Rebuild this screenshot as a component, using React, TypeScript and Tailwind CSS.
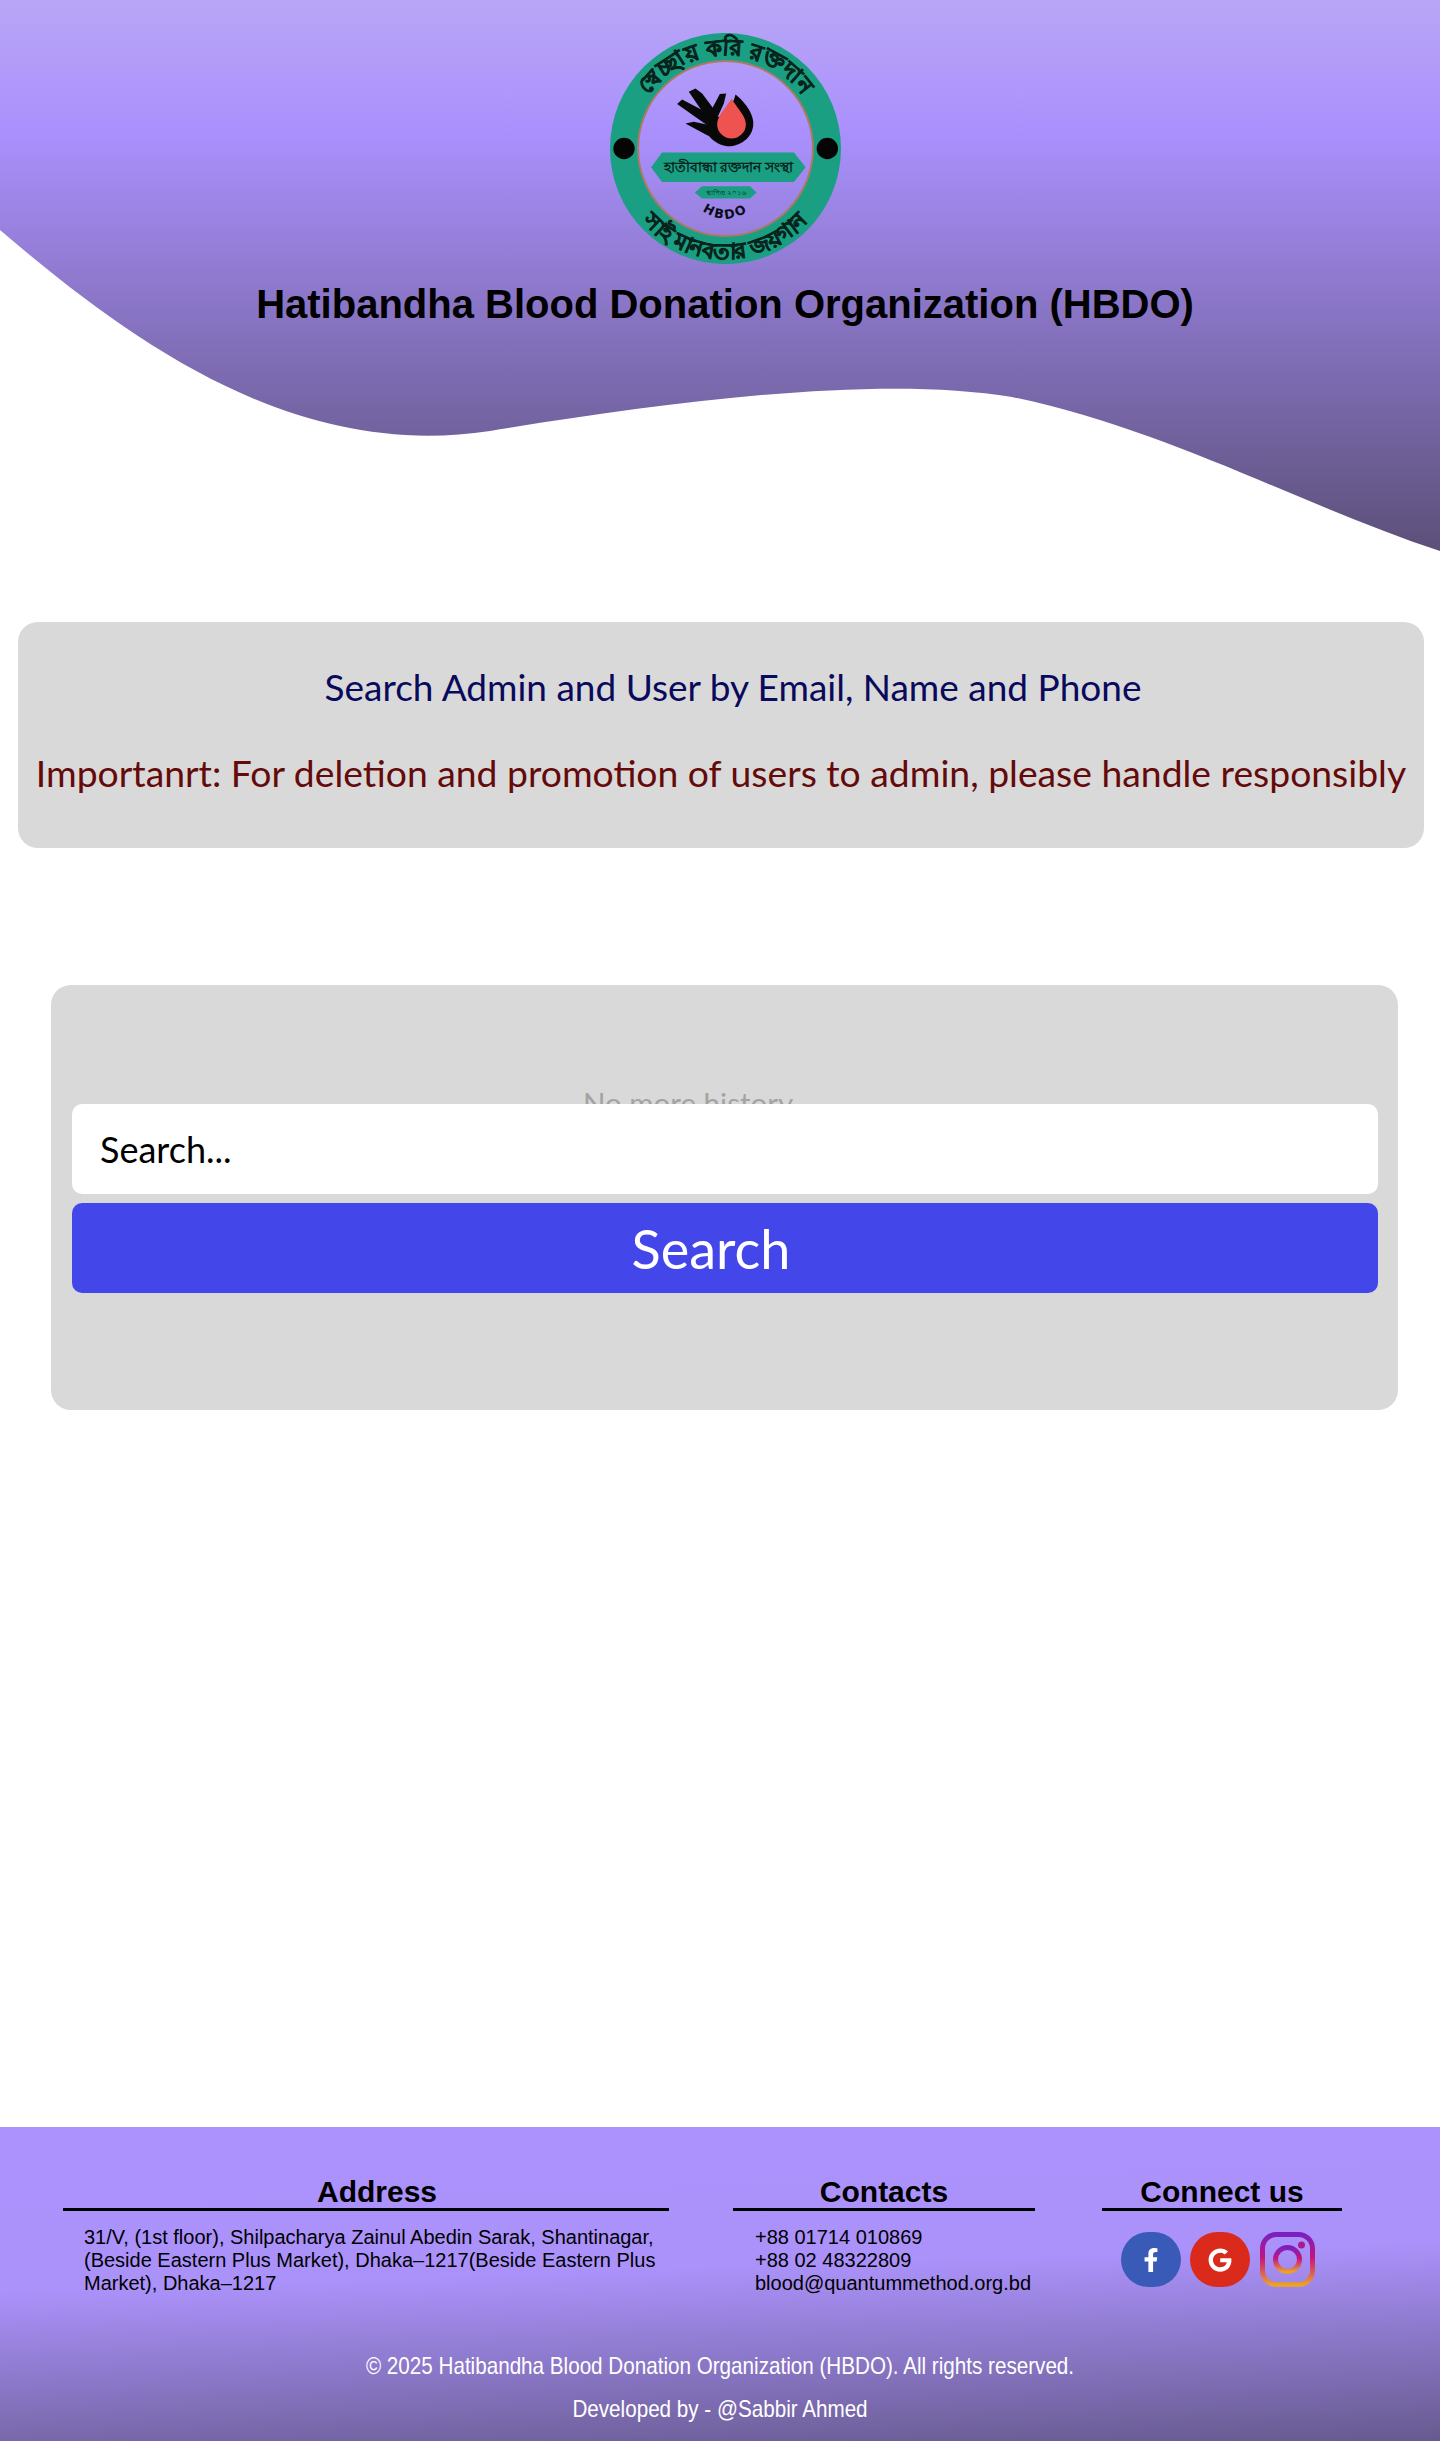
import { FaFacebookF, FaGoogle } from "react-icons/fa";

const bodyFont = "font-['Lato',sans-serif]";

function Logo() {
  return (
    <svg viewBox="149 69 692 692" className="w-[231px] h-[231px]">
      <defs>
        <path id="topArc" d="M 215 415 A 280 280 0 0 1 775 415" />
        <path id="bottomArc" d="M 163 415 A 332 332 0 0 0 827 415" />
        <path id="hbdoArc" d="M 395 575 Q 495 675 595 575" />
      </defs>
      <path
        fillRule="evenodd"
        fill="#1a9f82"
        d="M 149 415 a 346 346 0 1 0 692 0 a 346 346 0 1 0 -692 0 Z M 233 415 a 262 262 0 1 1 524 0 a 262 262 0 1 1 -524 0 Z"
      />
      <circle cx="495" cy="415" r="262" fill="none" stroke="#ab7a62" strokeWidth="6" />
      <circle cx="191" cy="415" r="32" fill="#050505" />
      <circle cx="800" cy="415" r="32" fill="#050505" />
      <text fontFamily="'Noto Sans', sans-serif" fontSize="68" fontWeight="700" fill="#06241c" stroke="#06241c" strokeWidth="2">
        <textPath href="#topArc" startOffset="50%" textAnchor="middle">স্বেচ্ছায় করি রক্তদান</textPath>
      </text>
      <text fontFamily="'Noto Sans', sans-serif" fontSize="66" fontWeight="700" fill="#06241c" stroke="#06241c" strokeWidth="2">
        <textPath href="#bottomArc" startOffset="50%" textAnchor="middle">সাই মানবতার জয়গান</textPath>
      </text>
      <path d="M 385 245 L 405 235 L 425 250 L 470 310 L 450 340 Z" fill="#080808" />
      <path d="M 350 282 L 365 268 L 445 310 L 440 345 Z" fill="#080808" />
      <path d="M 375 340 L 400 335 L 470 350 L 470 385 L 440 375 Z" fill="#080808" />
      <path d="M 478 252 L 497 250 L 490 280 L 465 335 L 445 315 Z" fill="#080808" />
      <path
        d="M 525 253 C 560 280 582 320 578 345 C 575 385 535 410 500 408 C 470 405 450 385 440 370 L 440 320 L 490 320 L 520 270 Z"
        fill="#080808"
      />
      <path d="M 513 266 C 490 300 470 320 470 342 A 43 43 0 0 0 556 342 C 556 320 535 300 513 266 Z" fill="#ef5350" />
      <polygon points="272,471 305,427 700,427 735,471 700,515 305,515" fill="#1a9f82" />
      <text x="503" y="485" textAnchor="middle" fontFamily="'Noto Sans', sans-serif" fontSize="42" fontWeight="700" fill="#06241c">হাতীবান্ধা রক্তদান সংস্থা</text>
      <polygon points="403,547 425,528 568,528 588,547 568,565 425,565" fill="#1a9f82" />
      <text x="497" y="555" textAnchor="middle" fontFamily="'Noto Sans', sans-serif" fontSize="22" fill="#06241c">স্থাপিত ২০১৬</text>
      <text fontFamily="'DejaVu Sans', sans-serif" fontSize="38" fontWeight="700" letterSpacing="6" fill="#0a0a1a">
        <textPath href="#hbdoArc" startOffset="50%" textAnchor="middle">HBDO</textPath>
      </text>
    </svg>
  );
}

function InstagramIcon() {
  return (
    <svg viewBox="0 0 55 55" className="w-[55px] h-[55px]">
      <defs>
        <linearGradient id="igGrad" x1="0" y1="0" x2="0" y2="1">
          <stop offset="0" stopColor="#7c1fc0" />
          <stop offset="0.45" stopColor="#c2157f" />
          <stop offset="0.75" stopColor="#d95a5a" />
          <stop offset="1" stopColor="#e8a030" />
        </linearGradient>
      </defs>
      <rect x="2.5" y="2.5" width="50" height="50" rx="14" fill="none" stroke="url(#igGrad)" strokeWidth="5" />
      <circle cx="27.5" cy="27.5" r="12" fill="none" stroke="url(#igGrad)" strokeWidth="5" />
      <circle cx="41.5" cy="13" r="3.5" fill="#b0178f" />
    </svg>
  );
}

function FooterColumn({ title, className, children }: { title: string; className: string; children: React.ReactNode }) {
  return (
    <div className={className}>
      <h3 className="text-center text-[30px] leading-[33px] font-bold text-black border-b-[3px] border-black">{title}</h3>
      {children}
    </div>
  );
}

export default function App() {
  return (
    <div className="relative w-full min-h-[2441px] bg-white flex flex-col font-['Liberation_Sans',sans-serif]">
      <header className="relative h-[622px] flex flex-col items-center pt-[33px]">
        <svg viewBox="0 0 1440 552" className="absolute top-0 left-0 w-full h-[552px]">
          <defs>
            <linearGradient id="headerGrad" x1="0" y1="0" x2="0" y2="1">
              <stop offset="0" stopColor="#b9a6f6" />
              <stop offset="0.24" stopColor="#aa90fd" />
              <stop offset="1" stopColor="#5c5079" />
            </linearGradient>
          </defs>
          <path
            d="M0,230 C140,350 300,460 490,431 C680,400 880,375 1012,397 C1170,430 1300,505 1440,551 L1440,0 L0,0 Z"
            fill="url(#headerGrad)"
          />
        </svg>
        <div className="relative ml-[10px] flex flex-col items-center">
          <Logo />
          <h1 className="mt-[18px] text-[40px] leading-[44px] font-bold text-black whitespace-nowrap">
            Hatibandha Blood Donation Organization (HBDO)
          </h1>
        </div>
      </header>

      <main className={`flex-1 ${bodyFont}`}>
        <section className="mx-[18px] w-[1406px] h-[226px] bg-[#d9d9d9] rounded-[20px] flex flex-col items-center pt-[41px]">
          <p className="ml-[24px] text-[37px] leading-[48px] text-[#0a0a5c] whitespace-nowrap">Search Admin and User by Email, Name and Phone</p>
          <p className="mt-[38px] text-[37.3px] leading-[48px] text-[#650a0a] whitespace-nowrap">
            Importanrt: For deletion and promotion of users to admin, please handle responsibly
          </p>
        </section>

        <section className="mt-[137px] ml-[51px] w-[1347px] h-[425px] bg-[#d9d9d9] rounded-[20px] px-[21px]">
          <div className="h-[119px] overflow-hidden relative">
            <p className="absolute top-[100px] left-[511px] text-[29.5px] leading-[36px] text-[#a3a3a3]">No more history</p>
          </div>
          <input
            placeholder="Search..."
            className="block w-[1306px] h-[90px] bg-white rounded-[10px] px-[28px] text-[36px] text-black placeholder:text-black outline-none"
          />
          <button className="mt-[9px] block w-[1306px] h-[90px] bg-[#4347ea] rounded-[10px] pr-[28px] text-[54px] text-white">
            Search
          </button>
        </section>
      </main>

      <footer className="h-[314px] bg-[linear-gradient(178deg,#ab92fc_0%,#ab92fb_45%,#675a8f_100%)] flex flex-col">
        <div className="flex pt-[48px]">
          <FooterColumn title="Address" className="ml-[63px] w-[606px] [&>h3]:pl-[22px]">
            <p className="mt-[15px] ml-[21px] mr-[10px] text-[20px] leading-[23px] text-black">
              31/V, (1st floor), Shilpacharya Zainul Abedin Sarak, Shantinagar, (Beside Eastern Plus Market), Dhaka–1217(Beside Eastern Plus Market), Dhaka–1217
            </p>
          </FooterColumn>
          <FooterColumn title="Contacts" className="ml-[64px] w-[302px]">
            <p className="mt-[15px] ml-[22px] text-[20px] leading-[23px] text-black whitespace-nowrap">
              +88 01714 010869
              <br />
              +88 02 48322809
              <br />
              blood@quantummethod.org.bd
            </p>
          </FooterColumn>
          <FooterColumn title="Connect us" className="ml-[67px] w-[240px]">
            <div className="mt-[21px] ml-[19px] flex gap-[9px]">
              <span className="w-[60px] h-[55px] rounded-full bg-[#3a5ab8] flex items-center justify-center text-white text-[24px]">
                <FaFacebookF />
              </span>
              <span className="w-[60px] h-[55px] rounded-full bg-[#d92a1c] flex items-center justify-center text-white text-[24px]">
                <FaGoogle />
              </span>
              <span className="ml-[1px]">
                <InstagramIcon />
              </span>
            </div>
          </FooterColumn>
        </div>
        <div className="mt-[49px] flex flex-col items-center text-white text-[24px] leading-[43px] scale-x-[0.86]">
          <p className="whitespace-nowrap">© 2025 Hatibandha Blood Donation Organization (HBDO). All rights reserved.</p>
          <p className="whitespace-nowrap">Developed by - @Sabbir Ahmed</p>
        </div>
      </footer>
    </div>
  );
}
